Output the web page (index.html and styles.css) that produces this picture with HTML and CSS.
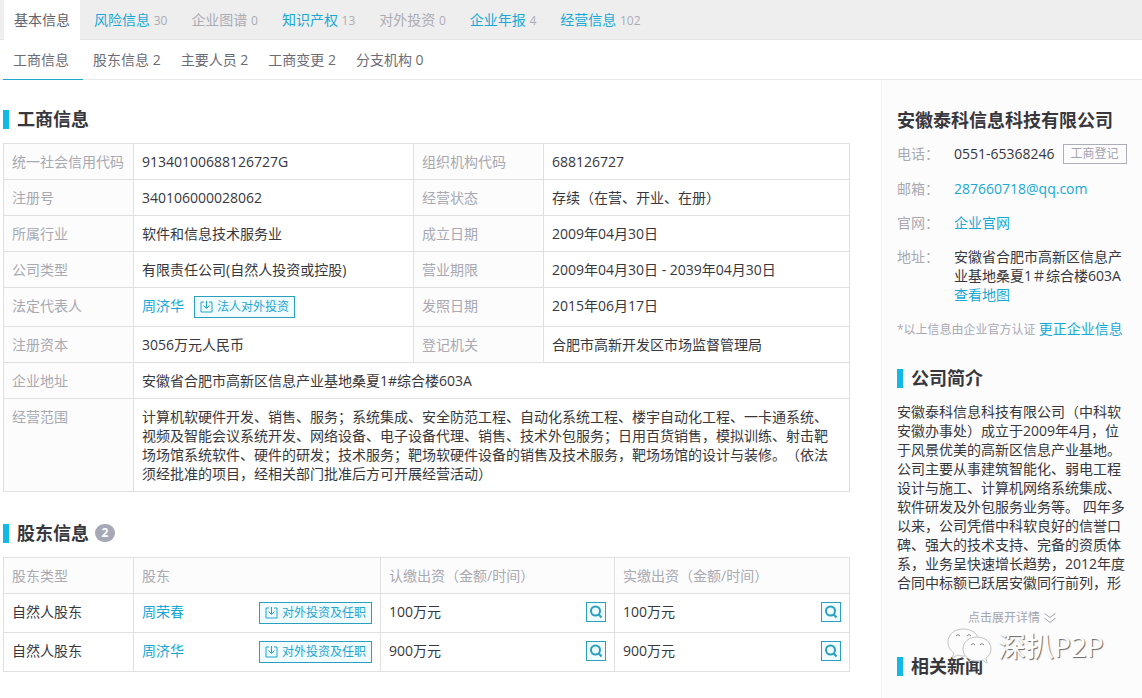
FILE: index.html
```html
<!DOCTYPE html>
<html lang="zh-CN">
<head>
<meta charset="utf-8">
<title>安徽泰科信息科技有限公司</title>
<link rel="stylesheet" href="styles.css">
</head>
<body>
<svg class="defs" aria-hidden="true">
  <symbol id="invest" viewBox="0 0 13 12"><path d="M4 1H1v10h11V1H9M6.500 0v7M3.500 4.500l3 3 3-3"/></symbol>
  <symbol id="search" viewBox="0 0 14 14"><circle cx="6.500" cy="6" r="4.500"/><path d="M9.800 9.500l2.700 3"/></symbol>
</svg>

<nav class="tabs" aria-label="企业信息分类">
  <a class="tab tab-current" href="#">基本信息</a>
  <a class="tab" href="#">风险信息 <span class="num">30</span></a>
  <a class="tab tab-empty" href="#">企业图谱 <span class="num">0</span></a>
  <a class="tab" href="#">知识产权 <span class="num">13</span></a>
  <a class="tab tab-empty" href="#">对外投资 <span class="num">0</span></a>
  <a class="tab" href="#">企业年报 <span class="num">4</span></a>
  <a class="tab" href="#">经营信息 <span class="num">102</span></a>
</nav>
<nav class="subtabs" aria-label="基本信息">
  <a class="subtab subtab-current" href="#">工商信息</a>
  <a class="subtab" href="#">股东信息 2</a>
  <a class="subtab" href="#">主要人员 2</a>
  <a class="subtab" href="#">工商变更 2</a>
  <a class="subtab" href="#">分支机构 0</a>
</nav>

<div class="layout">
  <main class="main">
    <section class="block">
      <h2 class="heading">工商信息</h2>
      <table class="grid">
        <colgroup><col class="c-label"><col class="c-value"><col class="c-label"><col></colgroup>
        <tbody>
          <tr><th scope="row">统一社会信用代码</th><td>91340100688126727G</td><th scope="row">组织机构代码</th><td>688126727</td></tr>
          <tr><th scope="row">注册号</th><td>340106000028062</td><th scope="row">经营状态</th><td>存续（在营、开业、在册）</td></tr>
          <tr><th scope="row">所属行业</th><td>软件和信息技术服务业</td><th scope="row">成立日期</th><td>2009年04月30日</td></tr>
          <tr><th scope="row">公司类型</th><td>有限责任公司(自然人投资或控股)</td><th scope="row">营业期限</th><td>2009年04月30日 - 2039年04月30日</td></tr>
          <tr><th scope="row">法定代表人</th><td><div class="person"><a class="link" href="#">周济华</a><button class="tag" type="button"><svg class="i-invest"><use href="#invest"/></svg>法人对外投资</button></div></td><th scope="row">发照日期</th><td>2015年06月17日</td></tr>
          <tr><th scope="row">注册资本</th><td>3056万元人民币</td><th scope="row">登记机关</th><td>合肥市高新开发区市场监督管理局</td></tr>
          <tr><th scope="row">企业地址</th><td colspan="3">安徽省合肥市高新区信息产业基地桑夏1#综合楼603A</td></tr>
          <tr><th scope="row">经营范围</th><td colspan="3">计算机软硬件开发、销售、服务；系统集成、安全防范工程、自动化系统工程、楼宇自动化工程、一卡通系统、视频及智能会议系统开发、网络设备、电子设备代理、销售、技术外包服务；日用百货销售，模拟训练、射击靶场场馆系统软件、硬件的研发；技术服务；靶场软硬件设备的销售及技术服务，靶场场馆的设计与装修。（依法须经批准的项目，经相关部门批准后方可开展经营活动）</td></tr>
        </tbody>
      </table>
    </section>

    <section class="block">
      <h2 class="heading">股东信息<span class="badge">2</span></h2>
      <table class="grid">
        <colgroup><col class="c-label"><col class="c-holder"><col class="c-paid"><col></colgroup>
        <thead>
          <tr><th scope="col">股东类型</th><th scope="col">股东</th><th scope="col">认缴出资（金额/时间）</th><th scope="col">实缴出资（金额/时间）</th></tr>
        </thead>
        <tbody>
          <tr>
            <td>自然人股东</td>
            <td><div class="spread"><a class="link" href="#">周荣春</a><button class="tag" type="button"><svg class="i-invest"><use href="#invest"/></svg>对外投资及任职</button></div></td>
            <td><div class="spread">100万元<button class="find" type="button" aria-label="查看"><svg class="i-search"><use href="#search"/></svg></button></div></td>
            <td><div class="spread">100万元<button class="find" type="button" aria-label="查看"><svg class="i-search"><use href="#search"/></svg></button></div></td>
          </tr>
          <tr>
            <td>自然人股东</td>
            <td><div class="spread"><a class="link" href="#">周济华</a><button class="tag" type="button"><svg class="i-invest"><use href="#invest"/></svg>对外投资及任职</button></div></td>
            <td><div class="spread">900万元<button class="find" type="button" aria-label="查看"><svg class="i-search"><use href="#search"/></svg></button></div></td>
            <td><div class="spread">900万元<button class="find" type="button" aria-label="查看"><svg class="i-search"><use href="#search"/></svg></button></div></td>
          </tr>
        </tbody>
      </table>
    </section>
  </main>

  <aside class="side">
    <h1 class="company">安徽泰科信息科技有限公司</h1>
    <dl class="contact">
      <dt>电话：</dt><dd class="phone">0551-65368246<span class="source">工商登记</span></dd>
      <dt>邮箱：</dt><dd><a class="link" href="#">287660718@qq.com</a></dd>
      <dt>官网：</dt><dd><a class="link" href="#">企业官网</a></dd>
      <dt>地址：</dt><dd>安徽省合肥市高新区信息产业基地桑夏1＃综合楼603A<br><a class="link" href="#">查看地图</a></dd>
    </dl>
    <p class="note">*以上信息由企业官方认证 <a class="link note-link" href="#">更正企业信息</a></p>

    <h2 class="heading">公司简介</h2>
    <p class="intro">安徽泰科信息科技有限公司（中科软安徽办事处）成立于2009年4月，位于风景优美的高新区信息产业基地。公司主要从事建筑智能化、弱电工程设计与施工、计算机网络系统集成、软件研发及外包服务业务等。 四年多以来，公司凭借中科软良好的信誉口碑、强大的技术支持、完备的资质体系，业务呈快速增长趋势，2012年度合同中标额已跃居安徽同行前列，形</p>
    <button class="more" type="button">点击展开详情<svg class="i-more" viewBox="0 0 12 12"><path d="M.5 1.500l5.500 4 5.500-4M.5 6l5.500 4.500L11.500 6"/></svg></button>

    <div class="news">
      <h2 class="heading">相关新闻</h2>
      <div class="watermark">
        <svg class="i-wechat" viewBox="0 0 46 38">
          <path class="bubble" d="M17 2C8 2 2 8 2 15c0 5 2 8 6 11l-2 5 6-3c2 1 4 1 6 1 8 0 15-6 15-14S26 2 17 2z"/>
          <path class="bubble" d="M31 10c-8 0-14 5-14 12s6 12 14 12c2 0 4 0 5-1l5 3-1-5c3-2 5-5 5-9 0-7-6-12-14-12z"/>
          <path class="eyes" d="M10 9q2-3 4 0M21 9q2-3 4 0M25 18q2-3 4 0M34 18q2-3 4 0"/>
        </svg>
        <span>深扒P2P</span>
      </div>
    </div>
  </aside>
</div>
</body>
</html>
```
FILE: styles.css
```css
* { box-sizing: border-box; }

body {
  margin: 0;
  min-height: 100vh;
  display: flex;
  flex-direction: column;
  background: #fff;
  color: #37373d;
  font: 14px/19px "Open Sans", "Noto Sans CJK SC", sans-serif;
  text-spacing-trim: space-all;
}

h1, h2, p, dl, dd { margin: 0; }
a { text-decoration: none; }
button { font-family: inherit; cursor: pointer; }
.defs { position: absolute; width: 0; height: 0; }
svg { flex: none; fill: none; stroke: currentColor; }
.link { color: #17a9d6; }

/* Navigation */
.tabs {
  display: flex;
  gap: 4px;
  height: 40px;
  padding-left: 4px;
  background: #eee;
  border-bottom: 1px solid #e4e4e4;
}
.tab {
  height: 40px;
  padding: 0 10px;
  line-height: 40px;
  color: #17a9d6;
}
.tab-current { background: #fff; color: #62626c; }
.tab-empty { color: #acacb4; }
.num { font-size: 12px; color: #acacb4; }

.subtabs {
  display: flex;
  height: 40px;
  padding-left: 3px;
  border-bottom: 1px solid #e8e8e8;
}
.subtab {
  height: 40px;
  padding: 0 10px;
  line-height: 40px;
  color: #6c6c76;
}
.subtab-current { padding-right: 14px; box-shadow: inset 0 -1px #1fa8cc; }

/* Page columns */
.layout { flex: 1; display: flex; }
.main { flex: 1; padding: 26px 31px 26px 3px; }
.block + .block { margin-top: 28px; }
.side {
  width: 261px;
  padding: 28px 15px 16px 15px;
  background: #fcfcfc;
  border-left: 1px solid #f1f1f1;
}

.heading {
  display: flex;
  align-items: center;
  font-size: 18px;
  line-height: 26px;
}
.heading::before {
  content: "";
  width: 6px;
  height: 19px;
  margin-right: 8px;
  background: #12b9e6;
}
.badge {
  width: 20px;
  height: 18px;
  margin-left: 6px;
  border-radius: 10px;
  background: #a6a8b6;
  color: #fff;
  font-size: 12px;
  line-height: 18px;
  text-align: center;
}

/* Tables */
.grid {
  width: 100%;
  margin-top: 11px;
  border-collapse: collapse;
  table-layout: fixed;
}
.grid th, .grid td {
  height: 36px;
  padding: 8px;
  border: 1px solid #e0e0e0;
  text-align: left;
  vertical-align: top;
}
.grid th {
  background: #fcfcfc;
  color: #a9a9b2;
  font-weight: 400;
  white-space: nowrap;
}
.c-label { width: 130px; }
.c-value { width: 280px; }
.c-holder { width: 247px; }
.c-paid { width: 234px; }
.person, .spread { display: flex; align-items: flex-start; }
.person { gap: 10px; }
.spread { justify-content: space-between; }

.tag {
  display: flex;
  align-items: center;
  gap: 4px;
  height: 22px;
  padding: 0 5px;
  border: 1px solid #2a9fc0;
  background: #f0fcff;
  color: #1fa5cf;
  font-size: 12px;
  line-height: 20px;
}
.i-invest { width: 13px; height: 12px; }
.find {
  width: 20px;
  height: 20px;
  padding: 2px;
  border: 1px solid #2a9fc0;
  background: #f0fcff;
  color: #2a9fc0;
}
.i-search { display: block; width: 14px; height: 14px; stroke-width: 2; }

/* Company summary */
.company { font-size: 18px; line-height: 24px; }
.contact {
  display: grid;
  grid-template-columns: 57px 1fr;
  row-gap: 15px;
  margin-top: 12px;
}
.contact dt {
  color: #a9a9b2;
  font-family: "Noto Sans CJK TC", sans-serif;
}
.phone { display: flex; gap: 8px; white-space: nowrap; }
.source {
  height: 20px;
  padding: 0 7px;
  border: 1px solid #aeaeb8;
  color: #a4a4b0;
  font-size: 12px;
  line-height: 18px;
}
.note {
  margin: 15px 0 26px;
  color: #a9a9b2;
  font-size: 12px;
  white-space: nowrap;
}
.note-link { font-size: 14px; }
.intro { margin-top: 11px; }
.more {
  display: flex;
  align-items: center;
  gap: 4px;
  margin: 16px auto 0;
  padding: 0;
  border: 0;
  background: none;
  color: #a4a4b0;
  font-size: 12px;
  line-height: 19px;
}
.i-more { width: 12px; height: 12px; }

.news { position: relative; margin-top: 26px; }
.watermark {
  position: absolute;
  top: -27px;
  left: 49px;
  display: flex;
  align-items: center;
  gap: 6px;
  color: #fff;
  font-size: 28px;
  line-height: 40px;
  white-space: nowrap;
  text-shadow: 1px 1px 1px #666;
}
.i-wechat { width: 46px; height: 38px; }
.bubble { fill: #fcfcfc; stroke: #c4c4c4; }
.eyes { stroke: #888; }
```
